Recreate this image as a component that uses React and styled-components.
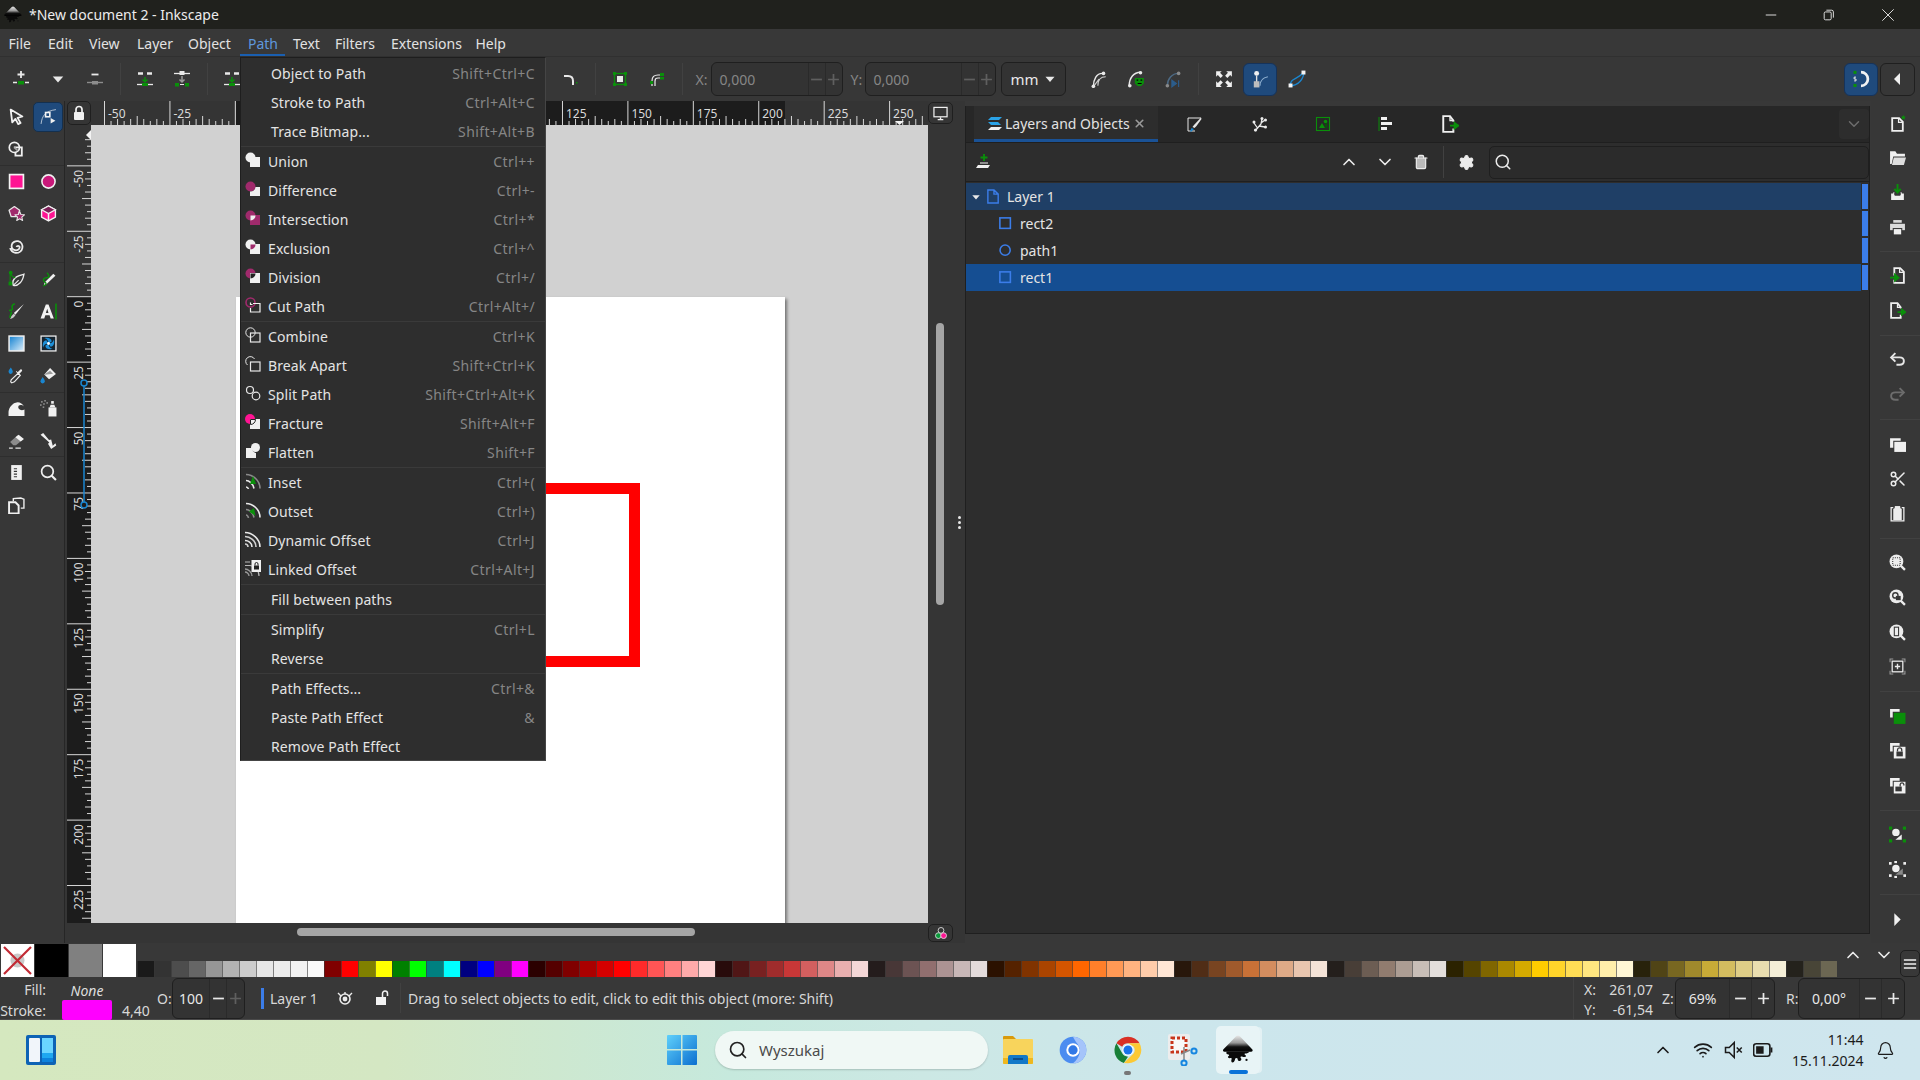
import React from 'react';
import styled, { createGlobalStyle } from 'styled-components';
import { Search, Wifi, Bell, ChevronUp, ChevronDown, Settings, Scissors, Trash2, X as XIcon } from 'lucide-react';

const Global = createGlobalStyle`
  html, body { margin: 0; padding: 0; background: #383838; overflow: hidden; }
  * { box-sizing: border-box; }
  #root { width: 1920px; height: 1080px; }
`;

const W = '#e9e9e9';
const GR = '#0a8f0a';
const PK = '#a02a6c';
const HOT = '#ff1493';
const BL = '#1a86d0';

const Icon = styled.svg.attrs(p => ({ viewBox: p.$vb || '0 0 16 16' }))`
  width: ${p => p.$s || 16}px;
  height: ${p => p.$s || 16}px;
  flex-shrink: 0;
  display: block;
  fill: none;
`;

const I = {
  layerAdd: <><path d="M8 0v7M4.5 3.5h7" stroke={W} strokeWidth="1.8" /><path d="M0 11.5h4M12 11.5h4" stroke={W} strokeWidth="1.4" /><rect x="5" y="10" width="6" height="3.5" fill={GR} /></>,
  caret: <path d="M2 5h12l-6 7z" fill={W} />,
  layerDel: <><path d="M4.5 3.5h7" stroke={W} strokeWidth="1.8" /><path d="M0 11.5h16" stroke="#8c8c8c" strokeWidth="1.4" /><rect x="5" y="10" width="6" height="3.5" fill="#8c8c8c" /></>,
  layerUp: <><path d="M1 2.5h5M10 2.5h5" stroke={W} strokeWidth="2.5" /><path d="M8 6v5M5.5 8.500 8 11l2.500-2.500" stroke={GR} strokeWidth="1.500" /><path d="M0 13.500h16" stroke={W} strokeWidth="1.300" /><rect x="5" y="12" width="6" height="3" fill={GR} /></>,
  layerDn: <><path d="M0 2.500h16" stroke={W} strokeWidth="1.300" /><rect x="5.500" y="0" width="5" height="4" fill={W} /><path d="M8 5v6M5.500 8.500 8 11l2.500-2.500" stroke="#9c9c9c" strokeWidth="1.500" /><rect x="1" y="12" width="4" height="3.500" fill={GR} /><rect x="11" y="12" width="4" height="3.500" fill={GR} /><rect x="6" y="13" width="4" height="1" fill={W} /></>,
  bend: <><path d="M2 5h4q5 0 5 5v4" stroke={W} strokeWidth="2" /><rect x="14" y="11" width="1.500" height="1.500" fill={GR} /></>,
  objBox: <><rect x="2.500" y="2.500" width="11" height="11" stroke={GR} strokeWidth="1.300" /><rect x="5" y="5" width="6" height="6" fill={W} /><rect x="1" y="1" width="3" height="3" fill={GR} /><rect x="12" y="1" width="3" height="3" fill={GR} /><rect x="1" y="12" width="3" height="3" fill={GR} /><rect x="12" y="12" width="3" height="3" fill={GR} /></>,
  offset: <><path d="M3 15V10q0-6 6-6h3" stroke={W} strokeWidth="1.200" /><path d="M6 15v-5q0-3 3-3h3" stroke={W} strokeWidth="1.200" /><rect x="11" y="2" width="4" height="3" fill={GR} /><rect x="11" y="6" width="4" height="2.500" fill={GR} /><rect x="1" y="10" width="3" height="3" fill={GR} /></>,
  c1: <><path d="M3 15C3 8 6 3 11 3" stroke={W} strokeWidth="1.300" /><path d="M7 14C7 9 9 6 14 6M3 15l5-7" stroke="#cfcfcf" strokeWidth="1" /><circle cx="3" cy="14.500" r="1.600" fill={W} /><circle cx="12" cy="3" r="1.600" fill={W} /></>,
  c2: <><path d="M2 14C2 7 6 2 12 2" stroke={W} strokeWidth="1.300" /><circle cx="2.500" cy="14" r="1.600" fill={W} /><circle cx="12" cy="2.500" r="1.600" fill={W} /><path d="M7 7h8v5q-4 5-8 0z" fill={GR} /><path d="M8.500 9h1.500M12 9h1.500M9.500 12h3.500" stroke="#000" strokeWidth=".9" /></>,
  c3: <><path d="M3 14C3 8 7 3 13 3" stroke="#4d6a85" strokeWidth="1.300" /><circle cx="3" cy="14" r="1.600" fill="#8a8a8a" /><circle cx="13" cy="3" r="1.600" fill="#8a8a8a" /><path d="M7 9l4 3-4 3zM13 9v6" stroke="#2c5d8c" fill="#2c5d8c" strokeWidth="1" /></>,
  fit: <><path d="M1 1h5l-1.500 1.500L7 5 5 7 2.500 4.500 1 6zM15 1v5l-1.500-1.500L11 7 9 5l2.500-2.500L10 1zM1 15v-5l1.500 1.500L5 9l2 2-2.500 2.500L6 15zM15 15h-5l1.500-1.500L9 11l2-2 2.500 2.500L15 10z" fill="#f0f0f0" /></>,
  handleOn: <><circle cx="5" cy="3" r="2.200" fill="#f0f0f0" /><path d="M5 5v6" stroke="#e0e0e0" strokeWidth="1.200" /><rect x="2.500" y="10" width="5" height="5.500" fill="#bdbdbd" /><path d="M8 14C8 10 10 7 15 6" stroke="#8fb0d0" strokeWidth="1" /></>,
  cubic: <><path d="M2 14C2 7 8 9 14 2" stroke={BL} strokeWidth="1.200" /><path d="M2 14C9 14 14 8 14 2" stroke={BL} strokeWidth="1.200" /><rect x="12" y="0.500" width="3.500" height="3.500" fill="#f4f4f4" /><rect x="0.500" y="12" width="3.500" height="3.500" fill="#f4f4f4" /></>,
  snap: <><path d="M8 2.500a5.500 5.500 0 0 1 0 11" stroke="#f2f2f2" strokeWidth="2.200" /><rect x="2" y="1.500" width="2.400" height="2.400" fill={GR} /><rect x="2" y="12" width="2.400" height="2.400" fill={GR} /><path d="M4 6.500H2.500v1.500H4v1.500H2.500" stroke="#e8e8e8" strokeWidth=".8" /></>,
  tri: <path d="M11 2v12L5 8z" fill="#f0f0f0" />,
  triR: <path d="M5 2v12l6-6z" fill="#f0f0f0" />,

  arrow: <path d="M2.500 1.500l11 6.500-4.500 1.300 2.800 4.700-2.200 1.200L7 10.200l-3 3.300z" stroke="#f2f2f2" strokeWidth="1.700" strokeLinejoin="round" />,
  node: <><path d="M1 15C2 7 5 3 15 1.500" stroke="#c8d2de" strokeWidth=".8" /><rect x="4.500" y="3.500" width="5.500" height="5.500" fill="#f4f4f4" /><rect x="6" y="5" width="2.500" height="2.500" fill="#1f4a7c" /><path d="M10 9.500v5l4.500-2.500z" fill="#f0f0f0" /></>,
  shapeB: <><circle cx="6" cy="6" r="4.800" stroke="#f0f0f0" strokeWidth="1.600" /><path d="M5.500 6h7.500v7.800H7V10" stroke="#f0f0f0" strokeWidth="1.700" /><path d="M6 6l3 3" stroke="#a0a0a0" strokeWidth="1.500" /></>,
  rect: <rect x="1.500" y="1.500" width="13" height="13" fill={HOT} stroke="#f4f4f4" strokeWidth="1.600" />,
  circle: <circle cx="8" cy="8" r="6.200" fill="#c9197a" stroke="#f0f0f0" strokeWidth="1.500" />,
  star: <><path d="M6 1.500l5 3.500-2 6H3L1 5z" fill={PK} stroke="#e8e8e8" strokeWidth="1.200" strokeLinejoin="round" /><path d="M11 6l1.200 3 3.300.2-2.500 2.200.8 3.200L11 13l-2.800 1.600.8-3.200-2.500-2.200 3.300-.2z" fill={PK} stroke="#e8e8e8" strokeWidth="1" strokeLinejoin="round" /></>,
  box3d: <><path d="M8 1l6.500 3.500v7L8 15l-6.500-3.500v-7z" fill={HOT} stroke="#f2f2f2" strokeWidth="1.300" strokeLinejoin="round" /><path d="M1.500 4.500L8 1l6.500 3.500L8 8z" fill="#7d1f57" stroke="#f2f2f2" strokeWidth="1.200" /><path d="M8 8v7" stroke="#f2f2f2" strokeWidth="1.400" /></>,
  spiral: <path d="M8 8.500a1.600 1.600 0 0 1 3 0c0 2.500-2.500 3.500-4.500 3C4 11 3 9 3.500 6.500 4 4 7 2.500 9.500 3c3 .7 4.500 3.500 4 6.500-.5 3-3.500 5-6.500 4.500-2.500-.4-4.300-2-5-4.500" stroke="#ececec" strokeWidth="1.700" />,
  pen: <><path d="M5 14.500c-1-3 0-6 3-8 2-1.300 5-2 7-2.500-.5 3-1.500 6-3.500 8-2 2-4.500 3-6.500 2.500z" stroke="#ececec" strokeWidth="1.300" /><path d="M5 14.500l5-5" stroke="#ececec" strokeWidth="1" /><path d="M2.500 2.500C3 6 5 7 7 7.500M2 3v9" stroke={GR} strokeWidth="1" /><circle cx="2.500" cy="2.500" r="1.800" fill={GR} /><rect x="0.500" y="11" width="3.500" height="3.500" fill={GR} /></>,
  pencil: <><path d="M6 13.500l-2.500 1 .8-2.700 8.200-8.300 2 2z" fill="#f0f0f0" /><path d="M3 15c3-1 4-2 1-4-2-2 0-4 3-4 2 0 2-2-.5-4.500" stroke={GR} strokeWidth="1.300" /></>,
  callig: <><path d="M15 1L5.500 9.500 7 11z" fill="#f0f0f0" /><path d="M2 15c.5-2 2-4 3.500-5l1.500 1.500C6 13 4 15 2 15z" fill="#c8c8c8" /><path d="M1 7c2 0 4-.5 3-2.500S5 1 6.500 1M2 14c-1-2 2-4 1-6" stroke={GR} strokeWidth="1.500" /></>,
  text: <><path d="M0.500 14.500L5.500 1.500h2.500l5 13h-3l-1-3h-4l-1 3zM5.500 9.300h2.500L6.800 5.500z" fill="#f2f2f2" fillRule="evenodd" /><rect x="14.300" y="0.500" width="1.500" height="15" fill={GR} /></>,
  grad: <><defs><linearGradient id="gr1" x1="0" y1="0" x2="1" y2="1"><stop offset="0" stopColor="#0f7fd0" /><stop offset="1" stopColor="#dff0fb" /></linearGradient></defs><rect x="1" y="1" width="14" height="14" fill="url(#gr1)" stroke="#f0f0f0" strokeWidth="1.400" /></>,
  mesh: <><rect x="1" y="1" width="14" height="14" fill="#15242f" stroke="#f0f0f0" strokeWidth="1.200" /><path d="M8 8C8 4 5 3 4 3c3-1 7 0 7 3zM8 8c4 0 5-3 5-4 1 3 0 7-3 7zM8 8c0 4 3 5 4 5-3 1-7 0-7-3zM8 8c-4 0-5 3-5 4-1-3 0-7 3-7z" fill="#1d8fd8" /><circle cx="8" cy="8" r="1.300" fill="#fff" /></>,
  dropper: <><path d="M3.500 15l-1-1 .5-2L9.500 6l2 2L6 14z" stroke="#ececec" strokeWidth="1.100" /><path d="M9 5l2.500-2.500c1-1 2.500.5 1.500 1.500L10.500 6.500l1.500 1-.8.7-3.700-3.700.7-.7z" fill="#ececec" /><path d="M2.500 0.500c1.500 1.800 2 3 2 4a2 2 0 0 1-4 0c0-1 1-2.500 2-4z" fill={BL} /></>,
  bucket: <><path d="M9.500 1l5.500 5.500-6.500 5L4 7z" fill="#f0f0f0" /><path d="M4.500 6.500l5-3 2.800 2.800-7.500 1z" fill="#9a9a9a" /><path d="M2.500 9.500c1.500 2 2 3 2 4a2 2 0 0 1-4 0c0-1 1-2.500 2-4z" fill={BL} /></>,
  tweak: <path d="M0.500 15v-4C1 7 4 2.500 9 2c2.500 0 5 1.500 6 4-1.500-1.500-4-1.700-5-.5-1 1.300 0 3.500 2 4 1 .2 2.500 0 3.500-.5V15z" fill="#f2f2f2" />,
  spray: <><rect x="8" y="7" width="7.500" height="8.500" fill="#f0f0f0" /><path d="M9 7l1-2.500h3.500L14.500 7z" fill="#f0f0f0" /><rect x="10.500" y="1" width="2.500" height="2.500" fill="#f0f0f0" /><g fill="#8e8e8e"><rect x="1" y="1" width="1.500" height="1.500" /><rect x="4" y="0" width="1.500" height="1.500" /><rect x="3" y="3" width="1.500" height="1.500" /><rect x="6" y="2" width="1.500" height="1.500" /><rect x="0" y="4" width="1.500" height="1.500" /><rect x="2.500" y="6" width="1.500" height="1.500" /></g></>,
  eraser: <><path d="M2 9.500L9 3l5 4-6.500 5.500H5z" fill="#8c8c8c" /><path d="M7 5L10 2.500l5 4L12 9z" fill="#f2f2f2" /><path d="M1 15.200h3.500M7 15.200h5" stroke="#e8e8e8" strokeWidth="1.300" /></>,
  connector: <path d="M0.500 2.500L3 1l5.500 6.500L10.500 7 12 13l2.500-2.300.8 2-4.800 3.300L7.500 11l1.300-.8-1.300-1.500z" fill="#f0f0f0" />,
  pages: <><path d="M3 1h10v14H3z" fill="#f0f0f0" /><path d="M5.500 4.500h3M5.500 7h3M5.500 9.500h3M5.500 12h3" stroke="#373737" strokeWidth="1.100" /></>,
  zoom: <><circle cx="7" cy="7" r="5.500" stroke="#f0f0f0" strokeWidth="1.600" /><path d="M11 11l4 4" stroke="#f0f0f0" strokeWidth="2" /></>,
  pagesCopy: <><path d="M5 4V1.500l7-.5 3 1v8.500h-3" stroke="#f0f0f0" strokeWidth="1.300" /><path d="M1 5h6l3 3v7.500H1z" stroke="#f0f0f0" strokeWidth="1.800" /></>,

  newDoc: <><path d="M3 3h6.500L13 6.500V15H3z" stroke="#f0f0f0" strokeWidth="1.700" fill="#373737" /><path d="M9 3v4h4" stroke="#f0f0f0" strokeWidth="1.200" /><path d="M13.500 0l.7 1.500 1.600.2-1.100 1.100.3 1.600-1.500-.8-1.500.8.300-1.600-1.100-1.100 1.600-.2z" fill={GR} /></>,
  open: <><path d="M1 2h5l1.500 2.500H15V7H4L2.500 14H1z" fill="#f0f0f0" /><path d="M4.500 8H16l-2 7H2.800z" fill="#dedede" /></>,
  save: <><path d="M2 9h2.500l1 2h5l1-2H14v6H2z" fill="#f0f0f0" /><path d="M4 9l1-1M12 9l-1-1" stroke="#f0f0f0" /><path d="M8 0v7M5 4.500L8 8l3-3.500" stroke={GR} strokeWidth="1.800" /></>,
  print: <><rect x="4" y="1" width="8" height="2.500" fill="#dcdcdc" /><rect x="1" y="4.500" width="14" height="6" fill="#dcdcdc" /><rect x="4" y="9" width="8" height="6" fill="#f0f0f0" stroke="#373737" /></>,
  importI: <><path d="M5 8V1h5.500L14 4.500V15H5v-3" stroke="#f0f0f0" strokeWidth="1.700" /><path d="M10 1v4h4" stroke="#f0f0f0" strokeWidth="1.200" /><path d="M1 10h7M5.500 7l3.500 3-3.500 3z" stroke={GR} fill={GR} strokeWidth="1.500" /></>,
  exportI: <><path d="M11 6V5L8 1H2v14h9v-3" stroke="#f0f0f0" strokeWidth="1.700" /><path d="M8 1v4h3" stroke="#f0f0f0" strokeWidth="1.200" /><path d="M8 9.500h6M12 7l3.500 2.500L12 12z" stroke={GR} fill={GR} strokeWidth="1.500" /></>,
  undo: <><path d="M6 2L2 6l4 4" stroke="#e6e6e6" strokeWidth="1.800" /><path d="M3 6h7q4 0 4 3.500t-4 3.500H7" stroke="#e6e6e6" strokeWidth="1.800" /></>,
  redo: <><path d="M10 2l4 4-4 4" stroke="#6d6d6d" strokeWidth="1.800" /><path d="M13 6H6q-4 0-4 3.500T6 13h3" stroke="#6d6d6d" strokeWidth="1.800" /></>,
  copy: <><path d="M1 2h10v2.500H4V11H1z" fill="#f0f0f0" /><rect x="5" y="5.500" width="11" height="9.500" fill="#f0f0f0" /></>,
  paste: <><path d="M4 2.500H2V15h12V2.500h-2" stroke="#f0f0f0" strokeWidth="1.200" /><path d="M5 2.500h6v1H12V14H4V3.500h1z" fill="#ececec" /><rect x="5.500" y="1" width="5" height="2.500" fill="#ececec" /></>,
  zoomSel: <><circle cx="7" cy="7" r="6.500" fill="#ececec" /><rect x="3.500" y="3.500" width="7" height="7" stroke="#373737" strokeWidth="1" strokeDasharray="1 1" /><path d="M11 11l4 4" stroke="#ececec" strokeWidth="2.200" /></>,
  zoomDraw: <><circle cx="7" cy="7" r="6.500" fill="#ececec" /><circle cx="6" cy="6" r="2.500" stroke="#373737" strokeWidth="1.300" fill="#ececec" /><rect x="6.500" y="6.500" width="4.500" height="4" fill="#373737" /><path d="M11 11l4 4" stroke="#ececec" strokeWidth="2.200" /></>,
  zoomPage: <><circle cx="7" cy="7" r="6.500" fill="#ececec" /><rect x="4.500" y="2.500" width="5" height="9" fill="#373737" /><rect x="5.500" y="3.500" width="3" height="7" fill="#ececec" /><path d="M11 11l4 4" stroke="#ececec" strokeWidth="2.200" /></>,
  zoomFit: <><path d="M1 4V1h3M12 1h3v3M15 12v3h-3M4 15H1v-3" stroke="#9a9a9a" strokeWidth="1" /><rect x="3" y="3" width="10" height="10" stroke="#ececec" strokeWidth="1.200" /><path d="M8 5.500v5M5.500 8h5" stroke="#ececec" strokeWidth="1.300" /></>,
  dup: <><path d="M1 1h9v2.500H3.500V9H1z" fill="#f0f0f0" /><rect x="4.500" y="4.500" width="11" height="10.500" fill={GR} /></>,
  lockObj: <><path d="M1 1h9v2.500H3.500V9H1z" fill="#f0f0f0" /><rect x="4.500" y="4.500" width="11" height="11" fill="#f0f0f0" /><rect x="7" y="9" width="6" height="4.500" fill="#373737" /><path d="M8 9V7.500a2 2 0 0 1 4 0V9" stroke="#373737" strokeWidth="1.200" /></>,
  unlockObj: <><path d="M1 1h9v2.500H3.500V9H1z" fill="#f0f0f0" /><rect x="4.500" y="4.500" width="11" height="11" fill="#f0f0f0" /><rect x="6" y="9" width="6" height="4.500" fill="#373737" /><path d="M10.500 9V7a1.800 1.800 0 0 1 3.500 0v1" stroke="#373737" strokeWidth="1.200" /></>,
  group: <><g fill={GR}><rect x="0" y="0.500" width="3" height="3" /><rect x="13" y="0.500" width="3" height="3" /><rect x="0" y="12.500" width="3" height="3" /><rect x="13" y="12.500" width="3" height="3" /></g><circle cx="6.500" cy="6" r="3.500" fill="#f0f0f0" /><path d="M6 13l6-5v5z" fill="#f0f0f0" /></>,
  ungroup: <><g fill="#f0f0f0"><rect x="0" y="1" width="2.500" height="2.500" /><rect x="13.500" y="1" width="2.500" height="2.500" /><rect x="0" y="12.500" width="2.500" height="2.500" /><rect x="13.500" y="12.500" width="2.500" height="2.500" /><rect x="5" y="0" width="2.500" height="2" /><rect x="5" y="14" width="2.500" height="2" /></g><circle cx="6.500" cy="7" r="3.500" fill="#f0f0f0" /><path d="M6 13l7-6v6z" fill="#8a8a8a" /></>,

  union: <><circle cx="5.500" cy="5.500" r="5" fill="#f0f0f0" /><rect x="5" y="5" width="10" height="10" fill="#f0f0f0" /></>,
  difference: <><circle cx="5.500" cy="5.500" r="5" fill={PK} /><path d="M10.500 6H15v9H5v-4.500a5 5 0 0 0 5.500-4.500z" fill="#f0f0f0" /></>,
  intersection: <><circle cx="5.500" cy="5.500" r="5" fill={PK} /><rect x="5" y="5" width="10" height="10" fill={PK} /><path d="M5.500 5.500h5a5 5 0 0 1-5 5z" fill="#f0f0f0" /></>,
  exclusion: <><circle cx="5.500" cy="5.500" r="5" fill="#f0f0f0" /><rect x="5" y="5" width="10" height="10" fill="#f0f0f0" /><path d="M5.500 5.500h5a5 5 0 0 1-5 5z" fill={PK} /></>,
  division: <><circle cx="5.500" cy="5.500" r="5" fill={PK} /><rect x="5" y="5" width="10" height="10" fill="#f0f0f0" /><path d="M5.500 5.500h5a5 5 0 0 1-5 5z" fill="#222" /></>,
  cut: <><circle cx="5.500" cy="5.500" r="4.500" stroke={PK} strokeWidth="1.600" /><path d="M5.500 5.500v2H7.500" stroke="#f0f0f0" strokeWidth="1.200" /><path d="M8 6.500h7V15H5.500V11" stroke="#f0f0f0" strokeWidth="1.200" /></>,
  combine: <><circle cx="5.500" cy="5.500" r="4.700" stroke="#e8e8e8" strokeWidth="1" /><rect x="5.500" y="6" width="9.500" height="9" stroke="#e8e8e8" strokeWidth="1.200" /></>,
  breakA: <><path d="M2.500 9A4.700 4.700 0 1 1 9.500 3" stroke="#e8e8e8" strokeWidth="1" /><rect x="5.500" y="6" width="9.500" height="9" stroke="#e8e8e8" strokeWidth="1.200" /></>,
  split: <><circle cx="5" cy="5" r="3.500" stroke="#e8e8e8" strokeWidth="1.200" /><circle cx="11" cy="11" r="3.800" stroke="#e8e8e8" strokeWidth="1.200" /></>,
  fracture: <><circle cx="5" cy="5" r="5" fill={HOT} /><rect x="5" y="5" width="10" height="10" fill="#f0f0f0" /><path d="M5.500 5.500h5a5 5 0 0 1-5 5z" stroke="#222" strokeWidth="1" /></>,
  flatten: <><path d="M1 5h6a5 5 0 0 0 4 5v5H1z" fill="#f0f0f0" /><circle cx="10.500" cy="4.500" r="4.500" fill="#f0f0f0" /></>,
  inset: <><path d="M1 1.500c7 0 14 6 14 14" stroke="#8a8a8a" strokeWidth="1.600" /><path d="M1 7.500c3 0 7 3 8 8" stroke={W} strokeWidth="1.600" /><path d="M1 14c1 0 2 .5 2.500 2" stroke={W} strokeWidth="1.600" /><path d="M8 3l3 8H5z" fill={GR} /></>,
  outset: <><path d="M1 1.500c7 0 14 6 14 14" stroke={W} strokeWidth="1.600" /><path d="M1 7.500c3 0 7 3 8 8" stroke="#8a8a8a" strokeWidth="1.600" /><path d="M1 13c1 0 2 1 2.500 3" stroke="#8a8a8a" strokeWidth="1.600" /><path d="M9 6l1.500 8L4 9.500z" fill={GR} /></>,
  dynamic: <><path d="M0 1.500c7 0 15 6 15 14.500" stroke={W} strokeWidth="1.600" /><path d="M0 5.500c5 0 11 4 11 10.500" stroke="#d0d0d0" strokeWidth="1.600" /><path d="M0 9.500c3 0 7 2 7 6.500" stroke={W} strokeWidth="1.600" /><path d="M0 13c2 0 3 1 3 3" stroke="#d0d0d0" strokeWidth="1.600" /></>,
  linked: <><path d="M0 2h5M0 5.500h5c4 0 9 4 9 10.500" stroke="#b8b8b8" strokeWidth="1.200" /><path d="M0 9c3 0 7 3 7 7M0 12c2 0 4 2 4 4" stroke="#9a9a9a" strokeWidth="1.300" /><rect x="6.500" y="0" width="9.500" height="12" fill="#f0f0f0" /><rect x="9" y="5.500" width="5" height="4" fill="#222" /><path d="M10 5.500V4a1.500 1.500 0 0 1 3 0v1.500" stroke="#222" strokeWidth="1" /></>,

  tabFill: <><path d="M2 2h13M2 2v13h7" stroke="#e6e6e6" strokeWidth="1" /><path d="M15 1.500L8 9l-1.500 2L8.500 12l2-2 5-7z" fill="#e6e6e6" /><path d="M5.500 12l2.500 1-2.500 2.500H4z" fill={BL} /></>,
  tabXml: <><path d="M4 15L10 8l1-5M8 10l6 1M6.500 12L3 7M10 7l4-3" stroke="#ececec" strokeWidth="1.300" /><circle cx="4.500" cy="14" r="1.600" fill="#ececec" /><circle cx="3" cy="6" r="1.500" fill="#ececec" /><circle cx="11" cy="2.500" r="1.500" fill="#ececec" /><circle cx="14.500" cy="11" r="1.500" fill="#ececec" /><circle cx="14.500" cy="4" r="1.500" fill="#ececec" /></>,
  tabImg: <><rect x="1.500" y="1.500" width="13" height="13" stroke={GR} strokeWidth="1.100" /><path d="M4 12l3-5 3 5z" fill={GR} /><circle cx="10.500" cy="5.500" r="1.800" fill={GR} /><path d="M10 7h2.500v5H10z" fill="#0a4f0a" /></>,
  tabAlign: <><path d="M1 1v14" stroke={GR} strokeWidth="1" /><rect x="3" y="1" width="6" height="3" fill="#f0f0f0" /><rect x="3" y="6" width="11" height="3" fill="#f0f0f0" /><rect x="3" y="11" width="6" height="3" fill="#f0f0f0" /></>,
  tabExport: <><path d="M11 6V5L8 1H2v14h9v-3" stroke="#f0f0f0" strokeWidth="1.700" /><path d="M8 1v4h3" stroke="#f0f0f0" strokeWidth="1.200" /><path d="M8 9.500h6M12 7l3.500 2.500L12 12z" stroke={GR} fill={GR} strokeWidth="1.500" /></>,
  layersTab: <><path d="M5 2h11l-3 3H2z" fill="#2aa3e8" /><path d="M2 7h10l3 3H5z" fill="#2aa3e8" /><path d="M5 12h11l-3 3H2z" fill="#f0f0f0" /></>,
  layerDoc: <path d="M2 1h6.500L13 5.500V15H2zM8.500 1v4.500H13" stroke="#3b7de9" strokeWidth="1.500" />,
  rowRect: <rect x="1" y="1" width="12" height="12" stroke="#3b7de9" strokeWidth="1.800" />,
  rowCirc: <circle cx="7" cy="7" r="5.800" stroke="#3b7de9" strokeWidth="1.800" />,
  eye: <><circle cx="8" cy="9" r="5" stroke="#ececec" strokeWidth="1.600" /><circle cx="8" cy="9" r="2.400" fill="#ececec" /><path d="M1 3l3 3M15 3l-3 3M8 2v2" stroke="#ececec" strokeWidth="1.400" /></>,
  unlock: <><rect x="2" y="7" width="10" height="8" fill="#f2f2f2" /><path d="M8.500 7V3.500a2.500 2.500 0 0 1 5 0V6" stroke="#f2f2f2" strokeWidth="1.500" /></>,
  lock: <><rect x="3" y="7" width="10" height="8" rx="1" fill="#f2f2f2" /><path d="M5 7V4.500a3 3 0 0 1 6 0V7" stroke="#f2f2f2" strokeWidth="1.700" /></>,
  monitor: <><rect x="1" y="1.500" width="14" height="10" stroke="#f0f0f0" strokeWidth="1.300" /><path d="M5 14.500h6M8 12v2" stroke="#f0f0f0" strokeWidth="1.500" /></>,
  cms: <><circle cx="8" cy="5" r="3.300" stroke="#ddd" strokeWidth="1" /><circle cx="5" cy="11" r="3.300" fill="#0a9a3a" stroke="#ddd" strokeWidth="1" /><circle cx="11" cy="11" r="3.300" fill={HOT} stroke="#ddd" strokeWidth="1" /></>,
  hamb: <path d="M1 3.500h14M1 8h14M1 12.500h14" stroke="#f0f0f0" strokeWidth="1.800" />,
};

const Logo = ({ s, id }) => (
  <Icon $vb="0 0 48 48" $s={s}>
    <defs>
      <linearGradient id={id} x1="0" y1="0" x2="0" y2="1">
        <stop offset="0" stopColor="#e8e8e8" />
        <stop offset="0.45" stopColor="#9a9a9a" />
        <stop offset="0.7" stopColor="#111" />
        <stop offset="1" stopColor="#000" />
      </linearGradient>
    </defs>
    <path d="M21 5c2-2 4-2 6 0l17 18c1.500 1.600.5 3.500-1.500 3.500H5c-2 0-3-2-1.500-3.500z" fill={`url(#${id})`} />
    <path d="M8 26h32c-1 2-3 3-6 3-1 0-1 1.500 0 2 2 .5 2 3-1 3-2 0-3-1-4.500-1-1.500 0-1 2 0 3 1 1.500-.5 4-3 3.500-1.500 0-2-1.500-2-3-.5-1.500-3-1.500-3.500 0-.5 2-1 5-3.500 5-2 0-2.500-2.500-1.500-4.500.5-1.500-1-2-2.500-1.500-2 .5-4-2-1.500-3 1-.5.5-1.500-.5-2-2-.5-3-1-3-2.500z" fill="#0a0a0a" />
    <circle cx="36" cy="38" r="1.600" fill="#111" />
  </Icon>
);

const Chrome = () => (
  <Icon $vb="0 0 48 48" $s={32}>
    <path d="M24 4a20 20 0 0 1 17.300 10H24a10 10 0 0 0-8.700 5L6.700 14A20 20 0 0 1 24 4z" fill="#d93025" />
    <path d="M6.700 14l8.600 15a10 10 0 0 0 8.700 5l-6.200 9.600A20 20 0 0 1 6.700 14z" fill="#188038" />
    <path d="M41.300 14A20 20 0 0 1 24 44l-6.200-.4L32.700 29a10 10 0 0 0 0-10L24 14z" fill="#fcc934" />
    <circle cx="24" cy="24" r="8.500" fill="#fff" />
    <circle cx="24" cy="24" r="6.800" fill="#1a73e8" />
  </Icon>
);

const Chromium = () => (
  <Icon $vb="0 0 48 48" $s={32}>
    <circle cx="24" cy="24" r="20" fill="#4b8cf0" />
    <path d="M24 4a20 20 0 0 1 0 40c10-8 14-20 6-30-2-3-4-6-6-10z" fill="#a5c4fa" />
    <circle cx="24" cy="24" r="10" fill="#fff" />
    <circle cx="24" cy="24" r="7" fill="#3178e6" />
  </Icon>
);

const Folder = () => (
  <Icon $vb="0 0 32 32" $s={32}>
    <path d="M1 3a1 1 0 0 1 1-1h9l3 3v3H1z" fill="#d99a0b" />
    <rect x="1" y="5" width="30" height="25" rx="1" fill="#f8d45c" />
    <path d="M1 24h30v5a1 1 0 0 1-1 1H2a1 1 0 0 1-1-1z" fill="#eeb81f" />
    <path d="M6 30v-7a2 2 0 0 1 2-2h16a2 2 0 0 1 2 2v7z" fill="#1278c8" />
    <rect x="11" y="24" width="10" height="2" fill="#0b4d8c" />
  </Icon>
);

const Snip = () => (
  <Icon $vb="0 0 32 32" $s={32}>
    <rect x="1" y="0" width="22" height="26" rx="2" fill="#ededed" />
    <rect x="5" y="4" width="14" height="14" fill="#f8f8f8" stroke="#c8341a" strokeWidth="3" strokeDasharray="3 2" />
    <path d="M17 13v14M14 20l9-4" stroke="#888" strokeWidth="1.500" />
    <circle cx="27" cy="17" r="2.600" stroke="#1686e0" strokeWidth="2" />
    <circle cx="17" cy="29" r="2.600" stroke="#1686e0" strokeWidth="2" />
  </Icon>
);

const WinLogo = () => (
  <Icon $vb="0 0 30 30" $s={30}>
    <defs>
      <linearGradient id="wl" x1="0" y1="0" x2="1" y2="1"><stop offset="0" stopColor="#5fd0fb" /><stop offset="1" stopColor="#0b6fd0" /></linearGradient>
    </defs>
    <path d="M0 1a1 1 0 0 1 1-1h13v14H0zM15.500 0H29a1 1 0 0 1 1 1v13H15.500zM0 15.500h14V30H1a1 1 0 0 1-1-1zM15.500 15.500H30V29a1 1 0 0 1-1 1H15.500z" fill="url(#wl)" />
  </Icon>
);

const Widgets = () => (
  <Icon $vb="0 0 30 30" $s={30}>
    <rect x="0" y="0" width="30" height="30" rx="2" fill="#0d63b5" />
    <rect x="3" y="3" width="11" height="24" rx="1" fill="#f1f5fa" />
    <rect x="16" y="3" width="11" height="15" fill="#6bd5ff" />
    <rect x="16" y="18" width="11" height="5" fill="#1ea7f0" />
    <rect x="16" y="23" width="11" height="4" fill="#0d82dc" />
  </Icon>
);

/* ---------- frame ---------- */
const Page = styled.div`
  width: 1920px;
  height: 1080px;
  display: flex;
  flex-direction: column;
  overflow: hidden;
  position: relative;
  background: #383838;
  font-family: "Noto Sans", "Open Sans", sans-serif;
  font-size: 14px;
  color: #e6e6e6;
`;

const TitleBar = styled.header`
  height: 29px;
  flex: none;
  background: #20211d;
  display: flex;
  align-items: center;
  padding-left: 3px;
`;
const TitleText = styled.span`
  margin-left: 6px;
  font-size: 14px;
  color: #ececec;
  white-space: nowrap;
`;
const WinControls = styled.div`
  margin-left: auto;
  display: flex;
  padding-right: 3px;
`;
const WinBtn = styled.div`
  width: 58.500px;
  height: 29px;
  display: flex;
  align-items: center;
  justify-content: center;
`;

const MenuBar = styled.nav`
  height: 28px;
  flex: none;
  background: #383838;
  display: flex;
  align-items: stretch;
  padding-left: 0.600px;
  border-bottom: 1px solid #303030;
`;
const MenuEntry = styled.div`
  width: ${p => p.$w}px;
  flex: none;
  padding: 2px 0 0 8px;
  display: flex;
  align-items: center;
  color: ${p => (p.$active ? '#5f97dd' : '#e2e2e2')};
  box-shadow: ${p => (p.$active ? 'inset 0 -2px 0 #1a5fb0' : 'none')};
  white-space: nowrap;
`;

const CommandBar = styled.div`
  height: 44px;
  flex: none;
  background: #373737;
  display: flex;
  align-items: center;
  padding-left: 2.500px;
`;
const Slot = styled.div`
  width: ${p => p.$w || 37}px;
  height: ${p => p.$h || 34}px;
  flex: none;
  display: flex;
  align-items: center;
  justify-content: ${p => (p.$start ? 'flex-start' : 'center')};
`;
const VSep = styled.div`
  width: 1px;
  height: 32px;
  flex: none;
  margin: 0 ${p => p.$mx || 6}px;
  background: #414141;
`;
const Gap = styled.div`
  width: ${p => p.$w}px;
  flex: none;
`;
const FieldLabel = styled.span`
  width: ${p => p.$w || 15}px;
  flex: none;
  color: ${p => p.$color || '#868686'};
  white-space: nowrap;
`;
const SpinBox = styled.div`
  width: ${p => p.$w}px;
  height: ${p => p.$h || 34}px;
  flex: none;
  display: flex;
  align-items: stretch;
  background: #333;
  border: 1px solid #1f1f1f;
  border-radius: 6px;
`;
const SpinValue = styled.div`
  flex: 1;
  display: flex;
  align-items: center;
  justify-content: ${p => (p.$center ? 'center' : 'flex-start')};
  padding-left: ${p => (p.$center ? 0 : 8)}px;
  color: ${p => p.$color || '#868686'};
`;
const SpinBtn = styled.div`
  width: ${p => p.$w || 17}px;
  flex: none;
  border-left: 1px solid #2a2a2a;
  display: flex;
  align-items: center;
  justify-content: center;
  font-size: 0;
`;
const Sign = styled.svg.attrs({ viewBox: '0 0 12 12' })`
  width: 13px;
  height: 13px;
  display: block;
  stroke: ${p => p.$color || '#5f5f5f'};
  stroke-width: 1.600;
`;
const UnitBox = styled.div`
  width: 65px;
  height: 34px;
  flex: none;
  margin-left: 5px;
  border: 1px solid #1f1f1f;
  border-radius: 6px;
  background: #333;
  display: flex;
  align-items: center;
  justify-content: center;
  gap: 5px;
  color: #e8e8e8;
  font-size: 15px;
`;
const ToggleBtn = styled.div`
  width: ${p => p.$w || 34}px;
  height: 33px;
  flex: none;
  border-radius: 6px;
  display: flex;
  align-items: center;
  justify-content: center;
  background: ${p => (p.$on ? '#1f4a7c' : '#373737')};
  border: 1px solid ${p => (p.$on ? '#16335a' : '#1f1f1f')};
`;

/* ---------- workspace ---------- */
const Workspace = styled.main`
  height: 842px;
  flex: none;
  display: flex;
`;
const LeftTools = styled.aside`
  width: 65px;
  flex: none;
  background: #373737;
  border-right: 1px solid #262626;
`;
const ToolRow = styled.div`
  height: 32.400px;
  display: grid;
  grid-template-columns: 32px 32px;
  align-items: center;
  justify-items: center;
  border-bottom: ${p => (p.$sep ? '1px solid #2e2e2e' : '1px solid transparent')};
`;
const ToolCell = styled.div`
  width: 30px;
  height: 30px;
  display: flex;
  align-items: center;
  justify-content: center;
  border-radius: 5px;
  background: ${p => (p.$on ? '#1f4a7c' : 'transparent')};
  border: 1px solid ${p => (p.$on ? '#14304f' : 'transparent')};
`;

const CanvasGrid = styled.section`
  width: 900px;
  flex: none;
  display: grid;
  grid-template-columns: 26px 837px 37px;
  grid-template-rows: 24px 798px 20px;
  background: #353535;
`;
const LockCorner = styled.div`
  display: flex;
  align-items: center;
  justify-content: center;
  padding-left: 2px;
  & > div {
    width: 24px;
    height: 24px;
    border: 1px solid #1f1f1f;
    border-radius: 5px;
    display: flex;
    align-items: center;
    justify-content: center;
  }
`;
const HRuler = styled.svg`
  display: block;
  width: 837px;
  height: 24px;
  font-family: "Noto Sans", sans-serif;
  font-size: 12px;
`;
const VRuler = styled.svg`
  display: block;
  width: 24px;
  height: 798px;
  margin-left: 2px;
  font-family: "Noto Sans", sans-serif;
  font-size: 12px;
`;
const RulerLabel = styled.text`
  fill: #dadada;
`;
const CornerBtn = styled.div`
  width: 25px;
  height: ${p => p.$h || 22}px;
  border: 1px solid #1f1f1f;
  border-radius: 5px;
  display: flex;
  align-items: center;
  justify-content: center;
`;
const Canvas = styled.div`
  position: relative;
  overflow: hidden;
  background: #d1d1d1;
`;
const SheetPage = styled.div`
  position: absolute;
  left: 145px;
  top: 172px;
  width: 549px;
  height: 800px;
  background: #fff;
  box-shadow: 2px 2px 3px rgba(0, 0, 0, 0.45);
`;
const RedRect = styled.div`
  position: absolute;
  left: 120px;
  top: 186px;
  width: 284px;
  height: 184px;
  border: 11px solid #ff0000;
`;
const VScrollTrack = styled.div`
  display: flex;
  padding-left: 8px;
  align-items: flex-start;
`;
const VThumb = styled.div`
  width: 8px;
  height: 282px;
  margin-top: 198px;
  background: #a5a5a5;
  border-radius: 4px;
`;
const Grip = styled.div`
  margin-left: 14px;
  margin-top: 391px;
  display: flex;
  flex-direction: column;
  gap: 2px;
  & > i {
    width: 3px;
    height: 3px;
    background: #e8e8e8;
    border-radius: 50%;
  }
`;
const HScrollTrack = styled.div`
  padding: 5px 0 0 206px;
`;
const HThumb = styled.div`
  width: 398px;
  height: 8px;
  background: #a5a5a5;
  border-radius: 4px;
`;

/* ---------- dock ---------- */
const DockWrap = styled.section`
  width: 906px;
  flex: none;
  padding: 5px 1px 9px 0;
`;
const Dock = styled.div`
  height: 100%;
  background: #2d2d2d;
  border: 1px solid #1f1f1f;
  border-top: none;
  display: flex;
  flex-direction: column;
`;
const TabBar = styled.div`
  height: 37px;
  flex: none;
  display: flex;
  align-items: stretch;
  background: #272727;
  border-bottom: 1px solid #1f1f1f;
  padding-left: 8px;
`;
const ActiveTab = styled.div`
  width: 184px;
  flex: none;
  display: flex;
  align-items: center;
  padding: 1px 0 0 12px;
  gap: 3px;
  background: #2d2d2d;
  border-bottom: 3px solid #1a5296;
  color: #e2e2e2;
  white-space: nowrap;
`;
const TabIcon = styled.div`
  width: ${p => p.$w || 64.500}px;
  flex: none;
  display: flex;
  align-items: center;
  justify-content: center;
`;
const TabMore = styled.div`
  margin: 3px 0 3px auto;
  width: 30px;
  background: #2d2d2d;
  border-radius: 4px;
  display: flex;
  align-items: center;
  justify-content: center;
`;
const LayerTools = styled.div`
  height: 39px;
  flex: none;
  display: flex;
  align-items: center;
  border-bottom: 1px solid #1f1f1f;
  padding-left: 10px;
`;
const SearchBox = styled.div`
  flex: 1;
  height: 33px;
  margin-left: 5px;
  border: 1px solid #1f1f1f;
  border-radius: 5px;
  display: flex;
  align-items: center;
  padding-left: 4px;
  background: #2b2b2b;
`;
const Tree = styled.div`
  flex: 1;
  padding-top: 1px;
`;
const TreeRow = styled.div`
  height: 27px;
  display: flex;
  align-items: center;
  background: ${p => p.$bg || 'transparent'};
  margin-right: 8px;
  position: relative;
  padding-left: ${p => p.$indent}px;
  gap: ${p => p.$gap ?? 7}px;
  color: #e4e4e4;
  &::after {
    content: "";
    position: absolute;
    right: -7px;
    top: 1px;
    bottom: 1px;
    width: 6px;
    background: #3b7de9;
  }
`;
const RightTools = styled.aside`
  width: 49px;
  flex: none;
  padding-top: 5px;
  background: #373737;
  display: flex;
  flex-direction: column;
`;
const RSlot = styled.div`
  height: 34.600px;
  flex: none;
  display: flex;
  align-items: center;
  justify-content: center;
  padding-left: 4px;
`;
const RSep = styled.div`
  height: ${p => p.$h || 15}px;
  flex: none;
  display: flex;
  align-items: center;
  padding-left: 9px;
  &::after {
    content: "";
    height: 1px;
    width: 100%;
    background: #414141;
  }
`;

/* ---------- palette ---------- */
const PaletteBar = styled.div`
  height: 34px;
  flex: none;
  display: flex;
  align-items: flex-end;
  padding-left: 1px;
  background: #383838;
`;
const BigSwatch = styled.div`
  width: 33px;
  height: 33px;
  margin-right: 1px;
  flex: none;
  background: ${p => p.$c};
`;
const SmallSwatches = styled.div`
  display: flex;
  width: 1700px;
  flex: none;
`;
const Swatch = styled.div`
  flex: 1;
  height: 16px;
  background: ${p => p.$c};
  border-left: 1px solid rgba(55, 55, 55, 0.6);
`;
const PalBtn = styled.div`
  width: ${p => p.$w || 31}px;
  flex: none;
  height: 33px;
  display: flex;
  align-items: flex-start;
  justify-content: center;
  padding-top: 1px;
`;
const PalMenu = styled.div`
  width: 20px;
  height: 27px;
  flex: none;
  margin-left: 1px;
  border: 1px solid #1f1f1f;
  border-radius: 5px;
  display: flex;
  align-items: center;
  justify-content: center;
`;

/* ---------- status ---------- */
const StatusBar = styled.footer`
  height: 43px;
  flex: none;
  background: #383838;
  display: flex;
  align-items: center;
  padding-right: 15px;
  border-bottom: 1px solid #4a4a4a;
`;
const StyleLabels = styled.div`
  width: 46px;
  flex: none;
  display: flex;
  flex-direction: column;
  align-items: flex-end;
  line-height: 21px;
  color: #d8d8d8;
  padding-top: 4px;
`;
const StyleValues = styled.div`
  width: 50px;
  flex: none;
  margin-left: 16px;
  padding-top: 5px;
  display: flex;
  flex-direction: column;
  align-items: center;
`;
const NoneText = styled.span`
  font-style: italic;
  line-height: 17px;
  color: #dedede;
`;
const StrokeBar = styled.div`
  width: 50px;
  height: 20px;
  margin-top: 1px;
  background: #ff00ff;
  border-radius: 2px;
`;
const StrokeWidth = styled.span`
  margin: 25px 0 0 10px;
  width: 27px;
  flex: none;
  color: #d8d8d8;
`;
const PlainLabel = styled.span`
  flex: none;
  margin-left: ${p => p.$ml || 0}px;
  width: ${p => (p.$w ? `${p.$w}px` : 'auto')};
  color: #d8d8d8;
  white-space: nowrap;
`;
const LayerMark = styled.div`
  width: 3px;
  height: 21px;
  flex: none;
  margin: 0 6px 0 16px;
  background: #3b7de9;
`;
const StatusMsg = styled.div`
  flex: 1;
  border-left: 1px solid #414141;
  padding-left: 7px;
  height: 30px;
  display: flex;
  align-items: center;
  color: #d8d8d8;
  white-space: nowrap;
`;
const Coords = styled.div`
  width: 80px;
  height: 42px;
  flex: none;
  border-left: 1px solid #414141;
  padding: 2px 0 0 10px;
  display: grid;
  grid-template-columns: 24px 1fr;
  grid-auto-rows: 20px;
  align-items: center;
  color: #d8d8d8;
  & > b { font-weight: 400; text-align: right; }
  & > span { text-align: left; }
`;

/* ---------- taskbar ---------- */
const Taskbar = styled.footer`
  height: 60px;
  flex: none;
  display: flex;
  align-items: center;
  padding-left: 26px;
  background: linear-gradient(90deg, #d5e8bf 0%, #d4e7c3 20%, #c6e9dd 38%, #cce8e4 48%, #cce6ec 62%, #cfe6ee 100%);
  color: #1b1b1b;
`;
const SearchPill = styled.div`
  width: 273px;
  height: 38px;
  flex: none;
  margin: 0 2px 0 18px;
  border-radius: 19px;
  background: #f0f8f5;
  box-shadow: 0 1px 2px rgba(0, 0, 0, 0.18);
  display: flex;
  align-items: center;
  padding-left: 13px;
  gap: 11px;
  font-size: 15px;
  color: #4a4a4a;
`;
const TaskIcon = styled.div`
  width: ${p => p.$w || 55}px;
  height: 48px;
  flex: none;
  margin-left: ${p => p.$ml || 0}px;
  position: relative;
  display: flex;
  align-items: center;
  justify-content: center;
  ${p => p.$open && `
    background: rgba(255,255,255,0.55);
    border-radius: 5px;
    box-shadow: 3px 0 0 -1px rgba(255,255,255,0.45);
  `}
`;
const RunDot = styled.i`
  position: absolute;
  left: 50%;
  bottom: ${p => (p.$active ? 0 : -1)}px;
  width: ${p => (p.$active ? 19 : 7)}px;
  height: 4px;
  margin-left: ${p => (p.$active ? -9.500 : -3.500)}px;
  border-radius: 2px;
  background: ${p => (p.$active ? '#0a72d8' : '#777')};
`;
const Tray = styled.div`
  margin-left: auto;
  display: flex;
  align-items: center;
  padding-right: 25px;
`;
const TrayIcon = styled.div`
  width: 30px;
  display: flex;
  align-items: center;
  justify-content: center;
`;
const Clock = styled.div`
  width: 84px;
  margin: 0 12.500px 0 0;
  text-align: right;
  font-size: 14px;
  line-height: 21px;
  color: #1b1b1b;
  white-space: nowrap;
`;

/* ---------- path menu ---------- */
const Dropdown = styled.div`
  position: absolute;
  left: 240px;
  top: 57px;
  width: 306px;
  height: 704px;
  padding-top: 1px;
  background: #2e2e2e;
  border: 1px solid #1e1e1e;
  border-right-color: #454545;
  border-bottom-color: #454545;
  display: flex;
  flex-direction: column;
`;
const DropRow = styled.div`
  height: 29px;
  flex: none;
  display: flex;
  align-items: center;
  padding: 0 10px 0 ${p => (p.$icon ? 4 : 30)}px;
  color: #e4e4e4;
  white-space: nowrap;
`;
const DropIcon = styled(Icon)`
  margin-bottom: 3px;
`;
const DropLabel = styled.span`
  margin-left: ${p => (p.$icon ? 7 : 0)}px;
  letter-spacing: 0.1px;
`;
const Shortcut = styled.span`
  margin-left: auto;
  color: #868686;
  letter-spacing: 0.4px;
`;
const DropSep = styled.div`
  height: 1px;
  flex: none;
  background: #3a3a3a;
`;

/* ---------- data ---------- */
const menuNames = [['File', 39.4], ['Edit', 41], ['View', 48], ['Layer', 51], ['Object', 60], ['Path', 45], ['Text', 42], ['Filters', 56], ['Extensions', 84.5], ['Help', 50]];

const leftRows = [
  [['arrow', 0], ['node', 1], 0], [['shapeB', 0], null, 1],
  [['rect', 0], ['circle', 0], 0], [['star', 0], ['box3d', 0], 0], [['spiral', 0], null, 1],
  [['pen', 0], ['pencil', 0], 0], [['callig', 0], ['text', 0], 1],
  [['grad', 0], ['mesh', 0], 0], [['dropper', 0], ['bucket', 0], 1],
  [['tweak', 0], ['spray', 0], 0], [['eraser', 0], ['connector', 0], 1],
  [['pages', 0], ['zoom', 0], 0], [['pagesCopy', 0], null, 0],
];

const rightGroups = [
  ['newDoc', 'open', 'save', 'print'], ['importI', 'exportI'], ['undo', 'redo'],
  ['copy', 'cut', 'paste'], ['zoomSel', 'zoomDraw', 'zoomPage', 'zoomFit'],
  ['dup', 'lockObj', 'unlockObj'], ['group', 'ungroup'], ['triR'],
];

const dropGroups = [
  [['Object to Path', 'Shift+Ctrl+C'], ['Stroke to Path', 'Ctrl+Alt+C'], ['Trace Bitmap...', 'Shift+Alt+B']],
  [['Union', 'Ctrl++', 'union'], ['Difference', 'Ctrl+-', 'difference'], ['Intersection', 'Ctrl+*', 'intersection'], ['Exclusion', 'Ctrl+^', 'exclusion'], ['Division', 'Ctrl+/', 'division'], ['Cut Path', 'Ctrl+Alt+/', 'cut']],
  [['Combine', 'Ctrl+K', 'combine'], ['Break Apart', 'Shift+Ctrl+K', 'breakA'], ['Split Path', 'Shift+Ctrl+Alt+K', 'split'], ['Fracture', 'Shift+Alt+F', 'fracture'], ['Flatten', 'Shift+F', 'flatten']],
  [['Inset', 'Ctrl+(', 'inset'], ['Outset', 'Ctrl+)', 'outset'], ['Dynamic Offset', 'Ctrl+J', 'dynamic'], ['Linked Offset', 'Ctrl+Alt+J', 'linked']],
  [['Fill between paths', '']],
  [['Simplify', 'Ctrl+L'], ['Reverse', '']],
  [['Path Effects...', 'Ctrl+&'], ['Paste Path Effect', '&'], ['Remove Path Effect', '']],
];

const swatches = '1a1a1a 333333 4d4d4d 666666 969696 b3b3b3 cccccc e6e6e6 ececec f2f2f2 f9f9f9 800000 ff0000 808000 ffff00 008000 00ff00 008080 00ffff 000080 0000ff 800080 ff00ff 2b0000 550000 800000 aa0000 d40000 ff0000 ff2a2a ff5555 ff8080 ffaaaa ffd5d5 280b0b 501616 782121 a02c2c c83737 d35f5f de8787 e9afaf f4d7d7 241c1c 483737 6c5353 916f6f ac9393 c8b7b7 e3dbdb 2b1100 552200 803300 aa4400 d45500 ff6600 ff7f2a ff9955 ffb380 ffccaa ffe6d5 28170b 502d16 784421 a05a2c c87137 d38d5f deaa87 e9c6af f4e3d7 241f1c 483e37 6c5d53 917c6f ac9d93 c8beb7 e3dedb 2b2200 554400 806600 aa8800 d4aa00 ffcc00 ffd42a ffdd55 ffe680 ffeeaa fff6d5 28220b 504416 786721 a0892c c8ab37 d3bc5f decd87 e9ddaf f4eed7 24221c 484537 6c6753'.split(' ');

const PX = 2.617;
const H0 = 104.5 - 91 + 50 * PX; // x of 0 inside ruler
const V0 = 296.7 - 125;

const hTicks = [];
for (let u = -50; u <= 270; u += 2.5) {
  const x = H0 + u * PX;
  if (x < 0 || x > 837) continue;
  const major = u % 25 === 0;
  const half = u % 12.5 === 0;
  const five = u % 5 === 0;
  hTicks.push({ x, u, major, len: major ? 24 : half ? 9 : five ? 6 : 4 });
}
const vTicks = [];
for (let u = -60; u <= 240; u += 2.5) {
  const y = V0 + u * PX;
  if (y < 0 || y > 798) continue;
  const major = u % 25 === 0;
  const half = u % 12.5 === 0;
  const five = u % 5 === 0;
  vTicks.push({ y, u, major, len: major ? 24 : half ? 9 : five ? 6 : 4 });
}
// labels that lie under the open menu are not seen in the reference
const hLabels = hTicks.filter(t => t.major && (t.x + 91 < 225 || t.x + 91 > 546));

const Plus = ({ color }) => <Sign $color={color}><path d="M1 6h10M6 1v10" /></Sign>;
const Minus = ({ color }) => <Sign $color={color}><path d="M1 6h10" /></Sign>;

export default function App() {
  return (
    <Page>
      <Global />
      <TitleBar>
        <Logo s={20} id="lg1" />
        <TitleText>*New document 2 - Inkscape</TitleText>
        <WinControls>
          <WinBtn><Icon $s={14}><path d="M2 8h12" stroke="#f2f2f2" strokeWidth="1" /></Icon></WinBtn>
          <WinBtn><Icon $s={14}><rect x="2.500" y="4.500" width="8" height="9" rx="1.500" stroke="#f2f2f2" /><path d="M5 2.500h6a2 2 0 0 1 2 2V11" stroke="#f2f2f2" /></Icon></WinBtn>
          <WinBtn><Icon $s={14}><path d="M1.500 1.500l13 13M14.500 1.500l-13 13" stroke="#f2f2f2" strokeWidth="1" /></Icon></WinBtn>
        </WinControls>
      </TitleBar>

      <MenuBar>
        {menuNames.map(([n, w]) => (
          <MenuEntry key={n} $w={w} $active={n === 'Path'}>{n}</MenuEntry>
        ))}
      </MenuBar>

      <CommandBar>
        <Slot><Icon $s={16}>{I.layerAdd}</Icon></Slot>
        <Slot><Icon $s={14}>{I.caret}</Icon></Slot>
        <Slot><Icon $s={16}>{I.layerDel}</Icon></Slot>
        <VSep />
        <Slot><Icon $s={16}>{I.layerUp}</Icon></Slot>
        <Slot><Icon $s={16}>{I.layerDn}</Icon></Slot>
        <VSep />
        <Slot><Icon $s={16}>{I.layerUp}</Icon></Slot>
        <Gap $w={301} />
        <Slot><Icon $s={16}>{I.bend}</Icon></Slot>
        <VSep />
        <Slot><Icon $s={16}>{I.objBox}</Icon></Slot>
        <Slot><Icon $s={16}>{I.offset}</Icon></Slot>
        <VSep />
        <Gap $w={7} />
        <FieldLabel $w={15}>X:</FieldLabel>
        <SpinBox $w={132}><SpinValue>0,000</SpinValue><SpinBtn><Minus /></SpinBtn><SpinBtn><Plus /></SpinBtn></SpinBox>
        <Gap $w={8} />
        <FieldLabel $w={14}>Y:</FieldLabel>
        <SpinBox $w={131}><SpinValue>0,000</SpinValue><SpinBtn><Minus /></SpinBtn><SpinBtn><Plus /></SpinBtn></SpinBox>
        <UnitBox>mm<Icon $s={12}>{I.caret}</Icon></UnitBox>
        <Gap $w={15} />
        <Slot><Icon $s={18}>{I.c1}</Icon></Slot>
        <Slot><Icon $s={18}>{I.c2}</Icon></Slot>
        <Slot><Icon $s={18}>{I.c3}</Icon></Slot>
        <VSep />
        <Slot $w={38}><Icon $s={18}>{I.fit}</Icon></Slot>
        <ToggleBtn $on><Icon $s={18}>{I.handleOn}</Icon></ToggleBtn>
        <Slot $w={41}><Icon $s={18}>{I.cubic}</Icon></Slot>
        <Gap $w={526} />
        <ToggleBtn $on><Icon $s={20}>{I.snap}</Icon></ToggleBtn>
        <Gap $w={2} />
        <ToggleBtn $w={35}><Icon $s={16}>{I.tri}</Icon></ToggleBtn>
      </CommandBar>

      <Workspace>
        <LeftTools>
          {leftRows.map(([a, b, sep], i) => (
            <ToolRow key={i} $sep={sep}>
              <ToolCell>{a && <Icon $s={17}>{I[a[0]]}</Icon>}</ToolCell>
              <ToolCell $on={b && b[1]}>{b && <Icon $s={17}>{I[b[0]]}</Icon>}</ToolCell>
            </ToolRow>
          ))}
        </LeftTools>

        <CanvasGrid>
          <LockCorner><div><Icon $s={16}>{I.lock}</Icon></div></LockCorner>
          <HRuler>
            <rect x="0" y="0" width="837" height="24" fill="#343434" />
            <rect x="145" y="0" width="549" height="24" fill="#1c1c1c" />
            {hTicks.map(t => (
              <line key={t.u} x1={t.x} x2={t.x} y1={24 - t.len} y2={24} stroke="#d8d8d8" strokeWidth="1" />
            ))}
            {hLabels.map(t => (
              <RulerLabel key={t.u} x={t.x + 3.5} y={17}>{t.u}</RulerLabel>
            ))}
            <path d="M804 20h9l-4.500 4z" fill="#f4f4f4" />
          </HRuler>
          <Slot $w={37} $h={24} $start><CornerBtn $h={22}><Icon $s={15}>{I.monitor}</Icon></CornerBtn></Slot>

          <VRuler>
            <rect x="0" y="0" width="24" height="798" fill="#343434" />
            <rect x="0" y="172" width="24" height="626" fill="#1c1c1c" />
            {vTicks.map(t => (
              <line key={t.u} x1={24 - t.len} x2={24} y1={t.y} y2={t.y} stroke="#d8d8d8" strokeWidth="1" />
            ))}
            {vTicks.filter(t => t.major).map(t => (
              <RulerLabel key={t.u} transform={`translate(16 ${t.y + 3}) rotate(-90) `} textAnchor="end" y="0" x="-1">{t.u}</RulerLabel>
            ))}
            <path d="M17 258V380" stroke={BL} strokeWidth="1.500" />
            <circle cx="17" cy="258" r="3" fill="#1c1c1c" stroke={BL} strokeWidth="1.500" />
            <circle cx="17" cy="380" r="3" fill="#1c1c1c" stroke={BL} strokeWidth="1.500" />
            <path d="M19 10l5 5v-10z" fill="#f4f4f4" />
          </VRuler>
          <Canvas>
            <SheetPage><RedRect /></SheetPage>
          </Canvas>
          <VScrollTrack>
            <VThumb />
            <Grip><i /><i /><i /></Grip>
          </VScrollTrack>

          <div />
          <HScrollTrack><HThumb /></HScrollTrack>
          <Slot $w={37} $h={20} $start><CornerBtn $h={18}><Icon $s={14}>{I.cms}</Icon></CornerBtn></Slot>
        </CanvasGrid>

        <DockWrap>
          <Dock>
            <TabBar>
              <ActiveTab>
                <Icon $s={16}>{I.layersTab}</Icon>
                <span>Layers and Objects</span>
                <XIcon size={13} color="#9a9a9a" strokeWidth={3} />
              </ActiveTab>
              <TabIcon $w={72}><Icon $s={16}>{I.tabFill}</Icon></TabIcon>
              <TabIcon $w={58}><Icon $s={16}>{I.tabXml}</Icon></TabIcon>
              <TabIcon $w={69}><Icon $s={16}>{I.tabImg}</Icon></TabIcon>
              <TabIcon $w={57}><Icon $s={16}>{I.tabAlign}</Icon></TabIcon>
              <TabIcon $w={72}><Icon $s={18}>{I.tabExport}</Icon></TabIcon>
              <TabMore><ChevronDown size={18} color="#6d6d6d" strokeWidth={2} /></TabMore>
            </TabBar>
            <LayerTools>
              <Icon $s={16}><path d="M8 0v7M4.500 3.500h7" stroke={GR} strokeWidth="1.800" /><path d="M2 11h12l-2 3H0z" fill="#f0f0f0" /><path d="M4 9h8" stroke="#f0f0f0" strokeWidth="1" /></Icon>
              <Gap $w={339} />
              <Slot $w={36}><ChevronUp size={20} color="#ececec" strokeWidth={2} /></Slot>
              <Slot $w={36}><ChevronDown size={20} color="#ececec" strokeWidth={2} /></Slot>
              <Slot $w={36}><Trash2 size={16} color="#ececec" fill="#bbb" strokeWidth={1.800} /></Slot>
              <VSep $mx={4} />
              <Slot $w={36}><Settings size={17} color="#ececec" fill="#ececec" strokeWidth={1.500} /></Slot>
              <SearchBox><Search size={18} color="#ececec" strokeWidth={2} /></SearchBox>
            </LayerTools>
            <Tree>
              <TreeRow $bg="#1f3f66" $indent={5} $gap={0}>
                <Icon $s={10}>{I.caret}</Icon>
                <Gap $w={5} />
                <Icon $s={15}>{I.layerDoc}</Icon>
                <Gap $w={6} />
                <span>Layer 1</span>
              </TreeRow>
              <TreeRow $indent={33}><Icon $s={14}>{I.rowRect}</Icon><span>rect2</span></TreeRow>
              <TreeRow $indent={33}><Icon $s={14}>{I.rowCirc}</Icon><span>path1</span></TreeRow>
              <TreeRow $bg="#154e92" $indent={33}><Icon $s={14}>{I.rowRect}</Icon><span>rect1</span></TreeRow>
            </Tree>
          </Dock>
        </DockWrap>

        <RightTools>
          {rightGroups.map((g, i) => (
            <React.Fragment key={i}>
              {g.map(n => (
                <RSlot key={n}>
                  {n === 'cut'
                    ? <Scissors size={18} color="#ececec" strokeWidth={2} />
                    : <Icon $s={17}>{I[n]}</Icon>}
                </RSlot>
              ))}
              {i < rightGroups.length - 1 && <RSep $h={i === 0 ? 14 : 15} />}
            </React.Fragment>
          ))}
        </RightTools>
      </Workspace>

      <PaletteBar>
        <BigSwatch $c="#ffffff">
          <Icon $vb="0 0 33 33" $s={33}>
            <circle cx="16.500" cy="16.500" r="7" fill="#c9c9c9" />
            <path d="M3 3l27 27M30 3L3 30" stroke="#c22a34" strokeWidth="2.200" />
          </Icon>
        </BigSwatch>
        <BigSwatch $c="#000000" />
        <BigSwatch $c="#808080" />
        <BigSwatch $c="#ffffff" />
        <SmallSwatches>
          {swatches.map((c, i) => <Swatch key={i} $c={`#${c}`} />)}
        </SmallSwatches>
        <PalBtn><ChevronUp size={20} color="#ececec" strokeWidth={2} /></PalBtn>
        <PalBtn><ChevronDown size={20} color="#ececec" strokeWidth={2} /></PalBtn>
        <PalMenu><Icon $s={14}>{I.hamb}</Icon></PalMenu>
      </PaletteBar>

      <StatusBar>
        <StyleLabels><span>Fill:</span><span>Stroke:</span></StyleLabels>
        <StyleValues><NoneText>None</NoneText><StrokeBar /></StyleValues>
        <StrokeWidth>4,40</StrokeWidth>
        <PlainLabel $ml={8} $w={15}>O:</PlainLabel>
        <SpinBox $w={73} $h={41}>
          <SpinValue $center $color="#e8e8e8">100</SpinValue>
          <SpinBtn><Minus color="#e8e8e8" /></SpinBtn>
          <SpinBtn $w={18}><Plus /></SpinBtn>
        </SpinBox>
        <LayerMark />
        <PlainLabel $w={56}>Layer 1</PlainLabel>
        <Slot $w={37}><Icon $s={16}>{I.eye}</Icon></Slot>
        <Slot $w={37}><Icon $s={16}>{I.unlock}</Icon></Slot>
        <StatusMsg>Drag to select objects to edit, click to edit this object (more: Shift)</StatusMsg>
        <Coords>
          <span>X:</span><b>261,07</b>
          <span>Y:</span><b>-61,54</b>
        </Coords>
        <PlainLabel $ml={9} $w={13}>Z:</PlainLabel>
        <SpinBox $w={100} $h={41}>
          <SpinValue $center $color="#e8e8e8">69%</SpinValue>
          <SpinBtn $w={22}><Minus color="#e8e8e8" /></SpinBtn>
          <SpinBtn $w={23}><Plus color="#e8e8e8" /></SpinBtn>
        </SpinBox>
        <PlainLabel $ml={11} $w={12}>R:</PlainLabel>
        <SpinBox $w={107} $h={41}>
          <SpinValue $center $color="#e8e8e8">0,00°</SpinValue>
          <SpinBtn $w={22}><Minus color="#e8e8e8" /></SpinBtn>
          <SpinBtn $w={23}><Plus color="#e8e8e8" /></SpinBtn>
        </SpinBox>
      </StatusBar>

      <Taskbar>
        <Widgets />
        <Gap $w={611} />
        <WinLogo />
        <SearchPill><Search size={20} color="#222" strokeWidth={2} />Wyszukaj</SearchPill>
        <TaskIcon><Folder /></TaskIcon>
        <TaskIcon><Chromium /></TaskIcon>
        <TaskIcon><Chrome /><RunDot /></TaskIcon>
        <TaskIcon><Snip /></TaskIcon>
        <TaskIcon $w={44} $ml={6} $open><Logo s={34} id="lg2" /><RunDot $active /></TaskIcon>
        <Tray>
          <TrayIcon><ChevronUp size={20} color="#1b1b1b" strokeWidth={2} /></TrayIcon>
          <Gap $w={10} />
          <TrayIcon><Wifi size={20} color="#1b1b1b" strokeWidth={2} /></TrayIcon>
          <TrayIcon>
            <Icon $s={20}><path d="M2 6h3l4-4v12l-4-4H2zM11 6l4 4M15 6l-4 4" stroke="#1b1b1b" strokeWidth="1.200" /></Icon>
          </TrayIcon>
          <TrayIcon>
            <Icon $s={20}><rect x="0.500" y="3" width="13" height="10" rx="2" stroke="#1b1b1b" strokeWidth="1.300" /><rect x="2.500" y="5" width="6" height="6" fill="#1b1b1b" /><rect x="14" y="6" width="1.500" height="4" fill="#1b1b1b" /></Icon>
          </TrayIcon>
          <Gap $w={2} />
          <Clock>11:44<br />15.11.2024</Clock>
          <Bell size={19} color="#1b1b1b" strokeWidth={1.500} />
        </Tray>
      </Taskbar>

      <Dropdown>
        {dropGroups.map((g, i) => (
          <React.Fragment key={i}>
            {i > 0 && <DropSep />}
            {g.map(([label, key, ic]) => (
              <DropRow key={label} $icon={!!ic}>
                {ic && <DropIcon $s={16}>{I[ic]}</DropIcon>}
                <DropLabel $icon={!!ic}>{label}</DropLabel>
                <Shortcut>{key}</Shortcut>
              </DropRow>
            ))}
          </React.Fragment>
        ))}
      </Dropdown>
    </Page>
  );
}
